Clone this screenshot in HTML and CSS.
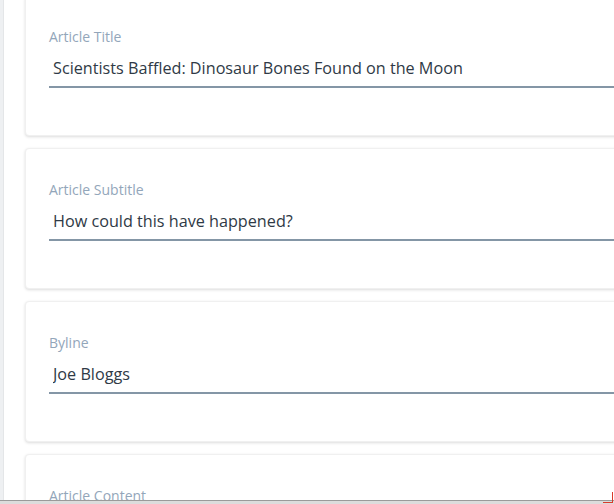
FILE: index.html
```html
<!DOCTYPE html>
<html>
<head>
<meta charset="utf-8">
<link rel="stylesheet" href="styles.css">
</head>
<body>
<div class="page">
  <div class="rail"></div>
  <main class="main">
    <div class="list">
      <section class="card">
        <label class="field">
          <span class="label">Article Title</span>
          <input class="input" type="text" value="Scientists Baffled: Dinosaur Bones Found on the Moon">
        </label>
      </section>
      <section class="card">
        <label class="field">
          <span class="label">Article Subtitle</span>
          <input class="input" type="text" value="How could this have happened?">
        </label>
      </section>
      <section class="card">
        <label class="field">
          <span class="label">Byline</span>
          <input class="input" type="text" value="Joe Bloggs">
        </label>
      </section>
      <section class="card">
        <label class="field">
          <span class="label">Article Content</span>
        </label>
      </section>
    </div>
  </main>
</div>
<div class="hbar"></div>
<div class="corner"></div>
</body>
</html>
```
FILE: styles.css
```css
html, body {
  margin: 0;
  padding: 0;
  background: #ffffff;
  font-family: "Open Sans", "Noto Sans", sans-serif;
  overflow: hidden;
}
body {
  width: 614px;
  height: 504px;
  position: relative;
}
.page {
  display: flex;
  height: 500px;
  overflow: hidden;
}
.rail {
  width: 3px;
  flex: none;
  background: #eef0f2;
  border-right: 1px solid #e4e6e8;
}
.main {
  flex: 1;
  overflow: hidden;
  padding-left: 21px;
}
.list {
  display: flex;
  flex-direction: column;
  gap: 12px;
  margin-top: -5px;
  width: 720px;
}
.card {
  box-sizing: border-box;
  height: 141px;
  background: #ffffff;
  border-radius: 4px;
  border: 1px solid #f0f0f0;
  box-shadow: 0 1px 3px rgba(0, 0, 0, 0.14);
  padding: 32px 0 0 23px;
}
.field {
  display: flex;
  flex-direction: column;
}
.label {
  font-size: 14px;
  line-height: 18px;
  color: #93a6ba;
}
.input {
  margin-top: 4px;
  box-sizing: border-box;
  height: 38px;
  border: none;
  border-bottom: 2px solid #8496a6;
  padding: 0 0 0 4px;
  font-family: inherit;
  font-size: 16.2px;
  color: #2f3a46;
  background: transparent;
  outline: none;
}
.hbar {
  height: 3px;
  background: #dcdcdc;
  border-top: 1px solid #9a9a9a;
}
.corner {
  position: absolute;
  right: 1px;
  bottom: 1px;
  width: 9px;
  height: 10px;
  border-right: 1px solid #d93a2b;
  border-bottom: 1px solid #d93a2b;
}
```
